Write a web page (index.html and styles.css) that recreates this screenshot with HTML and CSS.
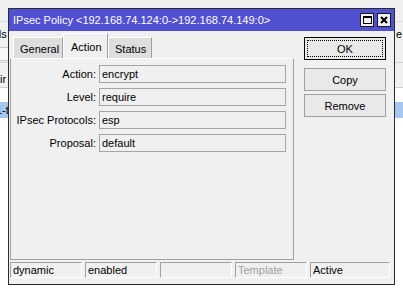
FILE: index.html
```html
<!DOCTYPE html>
<html>
<head>
<meta charset="utf-8">
<link rel="stylesheet" href="styles.css">
</head>
<body>
<div class="desk">
  <div class="bg-app">
    <div class="bg-top"></div>
    <div class="bg-row">
      <span class="bg-left-text">Totals</span>
      <span class="bg-right-text">e</span>
    </div>
    <div class="bg-filter"><span class="bg-filter-box"></span></div>
    <div class="bg-header"><span class="bg-left-text">Dir</span></div>
    <div class="bg-list">
      <div class="bg-line"></div>
      <div class="bg-line sel"><span class="bg-left-text">1-t</span></div>
    </div>
  </div>

  <div class="win">
    <div class="titlebar">
      <span class="title">IPsec Policy &lt;192.168.74.124:0-&gt;192.168.74.149:0&gt;</span>
      <div class="tbtns">
        <span class="tbtn"><svg width="12" height="12" viewBox="0 0 12 12"><rect x="2.5" y="2.5" width="8" height="7" fill="none" stroke="#000" stroke-width="1"/><rect x="2" y="2" width="9" height="2" fill="#000"/></svg></span>
        <span class="tbtn"><svg width="12" height="12" viewBox="0 0 12 12"><path d="M3 3 L9 9 M9 3 L3 9" stroke="#000" stroke-width="2" fill="none"/></svg></span>
      </div>
    </div>
    <div class="wbody">
      <div class="main">
        <div class="leftcol">
          <div class="tabs">
            <div class="tab">General</div>
            <div class="tab sel">Action</div>
            <div class="tab">Status</div>
          </div>
          <div class="panel">
            <div class="form">
              <label class="lbl">Action:</label><div class="field">encrypt</div>
              <label class="lbl">Level:</label><div class="field">require</div>
              <label class="lbl">IPsec Protocols:</label><div class="field">esp</div>
              <label class="lbl">Proposal:</label><div class="field">default</div>
            </div>
          </div>
        </div>
        <div class="btncol">
          <button class="btn ok"><span class="focus">OK</span></button>
          <button class="btn copy">Copy</button>
          <button class="btn">Remove</button>
        </div>
      </div>
      <div class="status">
        <div class="cell">dynamic</div>
        <div class="cell">enabled</div>
        <div class="cell"></div>
        <div class="cell dim">Template</div>
        <div class="cell last">Active</div>
      </div>
    </div>
  </div>
</div>
</body>
</html>
```

FILE: styles.css
```css
html, body {
  margin: 0;
  padding: 0;
}
body {
  width: 403px;
  height: 288px;
  overflow: hidden;
  background: #f0f0f0;
  font-family: "Liberation Sans", Arial, sans-serif;
  font-size: 11px;
  color: #000;
}
.desk {
  position: relative;
  width: 403px;
  height: 288px;
}

/* background application behind the dialog */
.bg-app {
  position: absolute;
  inset: 0;
  display: flex;
  flex-direction: column;
}
.bg-top {
  height: 21px;
  background: #f0f0f0;
  border-bottom: 1px solid #dcdcdc;
}
.bg-row {
  height: 24px;
  display: flex;
  align-items: center;
  justify-content: space-between;
  position: relative;
}
.bg-left-text {
  display: block;
  margin-left: -22px;
}
.bg-right-text {
  display: block;
  margin-right: -2px;
  width: 9px;
}
.bg-filter {
  height: 16px;
  display: flex;
  align-items: center;
}
.bg-filter-box {
  display: block;
  width: 10px;
  height: 12px;
  margin-left: -2px;
  border: 1px solid #c8c8c8;
  background: #f8f8f8;
}
.bg-header {
  height: 26px;
  display: flex;
  align-items: flex-end;
  padding-bottom: 2px;
  box-sizing: border-box;
  border-top: 1px solid #d0d0d0;
  border-bottom: 1px solid #d0d0d0;
  background: #f0f0f0;
}
.bg-header .bg-left-text {
  margin-left: -8px;
}
.bg-list {
  flex: 1;
  background: #fff;
}
.bg-line {
  height: 14px;
}
.bg-line.sel {
  height: 16px;
  background: #a6c8f0;
  display: flex;
  align-items: center;
}
.bg-line.sel .bg-left-text {
  margin-left: -4px;
}

/* dialog window */
.win {
  position: absolute;
  left: 8px;
  top: 8px;
  width: 387px;
  height: 277px;
  box-sizing: border-box;
  border: 1px solid #2b2b2b;
  background: #f0f0f0;
  display: flex;
  flex-direction: column;
}
.titlebar {
  height: 22px;
  background: #5050d0;
  display: flex;
  align-items: center;
  justify-content: space-between;
  padding: 0 3px 0 4px;
  flex: none;
}
.title {
  color: #fff;
  font-size: 11px;
  white-space: nowrap;
}
.tbtns {
  display: flex;
  gap: 3px;
}
.tbtn {
  width: 14px;
  height: 14px;
  box-sizing: border-box;
  border: 1px solid #1a1a1a;
  background: #f0f0f0;
  display: flex;
  align-items: center;
  justify-content: center;
}
.tbtn svg {
  display: block;
}

.wbody {
  flex: 1;
  display: flex;
  flex-direction: column;
  padding: 0 4px 6px 1px;
}
.main {
  display: flex;
  gap: 10px;
}
.leftcol {
  width: 284px;
  display: flex;
  flex-direction: column;
}
.tabs {
  height: 27px;
  display: flex;
  align-items: flex-end;
  padding-left: 3px;
}
.tab {
  height: 21px;
  box-sizing: border-box;
  padding: 5px 0 0 6px;
  background: #dedede;
  border-top: 1px solid #fff;
  border-left: 1px solid #fff;
  border-right: 1px solid #a0a0a0;
}
.tab:nth-child(1) { width: 50px; }
.tab:nth-child(3) { width: 44px; padding-left: 6px; }
.tab.sel {
  width: 45px;
  height: 25px;
  padding: 7px 0 0 7px;
  background: #f0f0f0;
}
.panel {
  height: 202px;
  box-sizing: border-box;
  border-top: 1px solid #fff;
  border-left: 1px solid #a0a0a0;
  border-right: 1px solid #a0a0a0;
  border-bottom: 1px solid #a0a0a0;
  padding: 6px 0 0 0;
}
.form {
  display: grid;
  grid-template-columns: 85px 187px;
  column-gap: 3px;
  row-gap: 5px;
  align-items: center;
}
.lbl {
  text-align: right;
  white-space: nowrap;
}
.field {
  height: 18px;
  box-sizing: border-box;
  border: 1px solid #a5a5a5;
  background: #f0f0f0;
  padding: 2px 0 0 2px;
  line-height: 13px;
}

.btncol {
  display: flex;
  flex-direction: column;
  width: 82px;
  padding-top: 6px;
}
.btn {
  height: 23px;
  box-sizing: border-box;
  border: 1px solid #a0a0a0;
  background: #e9e9e9;
  font-family: inherit;
  font-size: 11px;
  color: #000;
  padding: 0;
  margin: 0 0 3px 0;
}
.btn.ok {
  border-color: #000;
  padding: 2px;
  margin-bottom: 8px;
}
.focus {
  display: flex;
  align-items: center;
  justify-content: center;
  height: 100%;
  box-sizing: border-box;
  border: 1px dotted #000;
}

.status {
  margin-top: 2px;
  display: flex;
  gap: 3px;
  height: 16px;
}
.cell {
  width: 72px;
  box-sizing: border-box;
  border-top: 1px solid #a0a0a0;
  border-left: 1px solid #a0a0a0;
  border-right: 1px solid #fff;
  border-bottom: 1px solid #fff;
  padding: 1px 0 0 2px;
  line-height: 13px;
  white-space: nowrap;
}
.cell.dim {
  color: #a0a0a0;
}
.cell.last {
  width: 80px;
}
```
